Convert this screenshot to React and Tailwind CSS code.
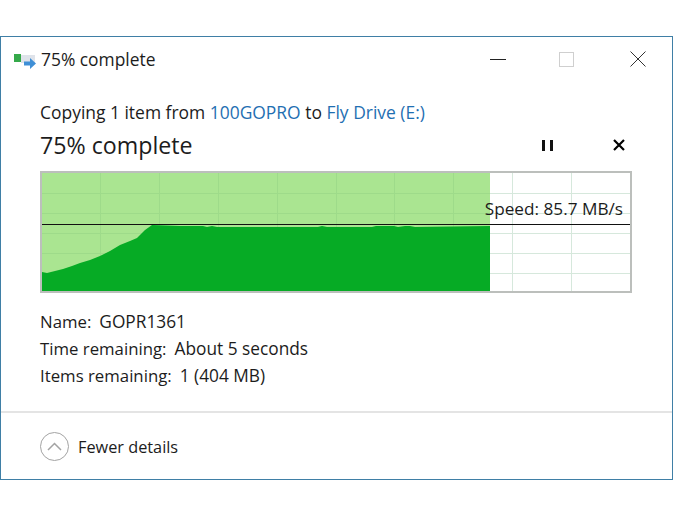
const verticals = [100, 159, 218, 277, 336, 394, 453, 512, 571];
const horizontals = [193, 213, 233, 253, 273];

const curve =
  "42,292 42,272 47,273 55,271 63,269 72,266 80,263 90,260 100,256 110,251 120,245 130,241 137,238 145,230 152,225 180,226 203,226 207,227 212,226 217,227 260,227 318,227 322,226 327,227 372,227 376,226 394,226 398,227 405,226 410,226 415,227 490,226 490,292";

const details = [
  ["Name:", "GOPR1361"],
  ["Time remaining:", "About 5 seconds"],
  ["Items remaining:", "1 (404 MB)"],
];

function CopyIcon() {
  return (
    <svg width="24" height="20" viewBox="0 0 24 20" className="shrink-0">
      <rect x="8" y="6" width="14" height="8" fill="#dfe3ea" />
      <rect x="1" y="5" width="7" height="8" fill="#35a94a" />
      <path d="M11 12.500h6V9l6 5.500-6 5.500v-3.500h-6z" fill="#3f8fd6" />
    </svg>
  );
}

function Chart() {
  return (
    <div className="relative h-[122px] w-[592px] border-2 border-[#bcbfbc]">
      <svg width="588" height="118" viewBox="42 173 588 118" className="block">
        <rect x="42" y="173" width="448" height="118" fill="#aae591" />
        {verticals.map((x) => (
          <rect key={x} x={x} y="173" width="1" height="118" fill={x < 490 ? "#9edb8a" : "#d6e8dc"} />
        ))}
        {horizontals.map((y) => (
          <g key={y}>
            <rect x="42" y={y} width="448" height="1" fill="#9edb8a" />
            <rect x="490" y={y} width="140" height="1" fill="#d6e8dc" />
          </g>
        ))}
        <polygon points={curve} fill="#06ab25" />
        <rect x="42" y="224" width="588" height="1" fill="#111111" />
      </svg>
      <span className="absolute right-[7px] top-[25px] text-[17.200px] leading-[22px] text-[#1c1c1c]">Speed: 85.7 MB/s</span>
    </div>
  );
}

export default function App() {
  return (
    <div className="h-[516px] w-[673px] bg-white pt-[36px] font-['Open_Sans','Noto_Sans',sans-serif] text-[#1c1c1c]">
      <div className="flex h-[444px] flex-col border border-[#3f7fa6] bg-white">
        <div className="flex h-[44px] items-center pl-[12px]">
          <CopyIcon />
          <span className="ml-[4px] text-[17.400px]">75% complete</span>
          <div className="ml-auto flex items-center pr-[26px]">
            <div className="h-px w-[16px] bg-[#222222]" />
            <div className="ml-[53px] h-[15px] w-[15px] border border-[#cfcfcf]" />
            <svg width="16" height="16" viewBox="0 0 16 16" stroke="#333333" strokeWidth="1" className="ml-[56px]">
              <path d="M0.500 0.500l15 15M15.500 0.500l-15 15" />
            </svg>
          </div>
        </div>

        <div className="flex flex-1 flex-col pl-[39px] pr-[40px]">
          <div className="mt-[19px] text-[17.450px] leading-[24px]">
            Copying 1 item from <span className="text-[#1f6fb2]">100GOPRO</span> to{" "}
            <span className="text-[#1f6fb2]">Fly Drive (E:)</span>
          </div>
          <div className="mt-[4px] flex h-[34px] items-center">
            <span className="text-[23.200px]">75% complete</span>
            <div className="ml-auto mr-[7px] flex items-center gap-[60px]">
              <div className="flex gap-[5px]">
                <div className="h-[11px] w-[3px] bg-[#111111]" />
                <div className="h-[11px] w-[3px] bg-[#111111]" />
              </div>
              <svg width="12" height="12" viewBox="0 0 12 12" stroke="#000000" strokeWidth="2.200">
                <path d="M1 1l10 10M11 1L1 11" />
              </svg>
            </div>
          </div>
          <div className="mt-[9px]">
            <Chart />
          </div>
          <div className="mt-[18px] flex flex-col gap-[5px] leading-[22px]">
            {details.map(([label, value]) => (
              <div key={label} className="flex gap-[8px]">
                <span className="text-[16.800px]">{label}</span>
                <span className="text-[17.300px]">{value}</span>
              </div>
            ))}
          </div>
        </div>

        <div className="flex h-[68px] items-center gap-[9px] border-t-2 border-[#e4e4e4] pl-[39px]">
          <div className="flex h-[29px] w-[29px] items-center justify-center rounded-full border border-[#a3a3a3]">
            <svg width="15" height="9" viewBox="0 0 15 9" fill="none" stroke="#a3a3a3" strokeWidth="1.500">
              <path d="M1 8l6.500-6.500L14 8" />
            </svg>
          </div>
          <span className="mt-[2px] text-[16.300px]">Fewer details</span>
        </div>
      </div>
    </div>
  );
}
